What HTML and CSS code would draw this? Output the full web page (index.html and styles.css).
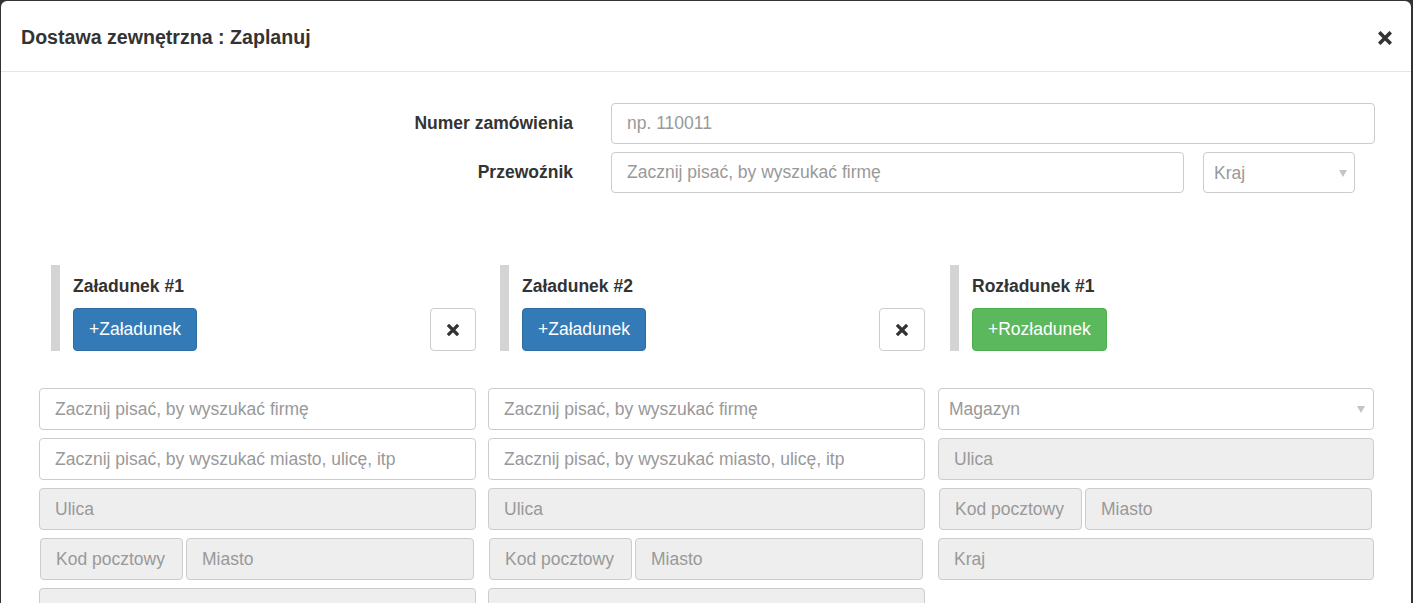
FILE: index.html
```html
<!DOCTYPE html>
<html lang="pl">
<head>
<meta charset="utf-8">
<title>Dostawa zewnętrzna : Zaplanuj</title>
<link rel="stylesheet" href="styles.css">
</head>
<body>
<div class="modal">
  <div class="modal-header">
    <h4 class="modal-title">Dostawa zewnętrzna : Zaplanuj</h4>
    <button class="close" type="button" aria-label="Zamknij">
      <svg width="14" height="14" viewBox="0 0 14 14"><path d="M2.5 2.5 L11.5 11.5 M11.5 2.5 L2.5 11.5" stroke="#333" stroke-width="3.6" stroke-linecap="square"/></svg>
    </button>
  </div>
  <div class="modal-body">
    <div class="top-form">
      <label class="form-label">Numer zamówienia</label>
      <div class="form-field"><input class="form-control" type="text" placeholder="np. 110011"></div>
      <label class="form-label">Przewoźnik</label>
      <div class="form-field split-carrier">
        <input class="form-control" type="text" placeholder="Zacznij pisać, by wyszukać firmę">
        <div class="select-wrap country"><select class="form-control select"><option>Kraj</option></select></div>
      </div>
    </div>

    <div class="columns">
      <div class="col">
        <div class="stop">
          <div class="stop-info">
            <h5 class="stop-title">Załadunek #1</h5>
            <button class="btn btn-primary" type="button">+Załadunek</button>
          </div>
          <button class="btn btn-remove" type="button" aria-label="Usuń">
            <svg width="12" height="12" viewBox="0 0 12 12"><path d="M2 2 L10 10 M10 2 L2 10" stroke="#333" stroke-width="3.2" stroke-linecap="square"/></svg>
          </button>
        </div>
        <div class="fields">
          <input class="form-control" type="text" placeholder="Zacznij pisać, by wyszukać firmę">
          <input class="form-control" type="text" placeholder="Zacznij pisać, by wyszukać miasto, ulicę, itp">
          <input class="form-control readonly" type="text" placeholder="Ulica" readonly>
          <div class="pair">
            <input class="form-control readonly postal" type="text" placeholder="Kod pocztowy" readonly>
            <input class="form-control readonly" type="text" placeholder="Miasto" readonly>
          </div>
          <input class="form-control readonly lower" type="text" placeholder="Kraj" readonly>
        </div>
      </div>

      <div class="col">
        <div class="stop">
          <div class="stop-info">
            <h5 class="stop-title">Załadunek #2</h5>
            <button class="btn btn-primary" type="button">+Załadunek</button>
          </div>
          <button class="btn btn-remove" type="button" aria-label="Usuń">
            <svg width="12" height="12" viewBox="0 0 12 12"><path d="M2 2 L10 10 M10 2 L2 10" stroke="#333" stroke-width="3.2" stroke-linecap="square"/></svg>
          </button>
        </div>
        <div class="fields">
          <input class="form-control" type="text" placeholder="Zacznij pisać, by wyszukać firmę">
          <input class="form-control" type="text" placeholder="Zacznij pisać, by wyszukać miasto, ulicę, itp">
          <input class="form-control readonly" type="text" placeholder="Ulica" readonly>
          <div class="pair">
            <input class="form-control readonly postal" type="text" placeholder="Kod pocztowy" readonly>
            <input class="form-control readonly" type="text" placeholder="Miasto" readonly>
          </div>
          <input class="form-control readonly lower" type="text" placeholder="Kraj" readonly>
        </div>
      </div>

      <div class="col col-last">
        <div class="stop">
          <div class="stop-info">
            <h5 class="stop-title">Rozładunek #1</h5>
            <button class="btn btn-success" type="button">+Rozładunek</button>
          </div>
        </div>
        <div class="fields">
          <div class="select-wrap warehouse"><select class="form-control select"><option>Magazyn</option></select></div>
          <input class="form-control readonly" type="text" placeholder="Ulica" readonly>
          <div class="pair">
            <input class="form-control readonly postal" type="text" placeholder="Kod pocztowy" readonly>
            <input class="form-control readonly" type="text" placeholder="Miasto" readonly>
          </div>
          <input class="form-control readonly" type="text" placeholder="Kraj" readonly>
        </div>
      </div>
    </div>
  </div>
</div>
</body>
</html>
```
FILE: styles.css
```css
html, body {
  height: 603px;
  overflow: hidden;
}
body {
  margin: 0;
  padding: 1px 2px 0 1px;
  background: #333;
  font-family: "Liberation Sans", Arial, sans-serif;
  font-size: 17.5px;
  color: #333;
  box-sizing: border-box;
}
* { box-sizing: border-box; }

.modal {
  background: #fff;
  border-radius: 6px 6px 0 0;
  min-height: 700px;
}

.modal-header {
  height: 71px;
  border-bottom: 1px solid #e5e5e5;
  display: flex;
  align-items: center;
  justify-content: space-between;
  padding: 0 19px 0 20px;
}
.modal-title {
  margin: 0;
  font-size: 19.6px;
  font-weight: bold;
  line-height: 24px;
  padding-top: 1px;
}
.close {
  border: 0;
  background: none;
  padding: 0;
  width: 14px;
  height: 14px;
  display: flex;
  margin-top: 3px;
}

.modal-body {
  padding: 31px 36px 0 38px;
}

.top-form {
  display: grid;
  grid-template-columns: 534px 1fr;
  column-gap: 38px;
  row-gap: 8px;
  align-items: center;
}
.form-label {
  text-align: right;
  font-weight: bold;
  font-size: 17.5px;
}
.form-field { display: flex; }
.split-carrier { gap: 19px; padding-right: 20px; }
.split-carrier > .form-control { flex: 1; }
.country { width: 152px; flex: none; }

.form-control {
  display: block;
  width: 100%;
  height: 41px;
  padding: 0 15px;
  font: 17.5px "Liberation Sans", Arial, sans-serif;
  color: #555;
  background: #fff;
  border: 1px solid #ccc;
  border-radius: 4px;
  outline: none;
}
.form-control::placeholder { color: #999; opacity: 1; }
.form-control.readonly { background: #eee; }

.select-wrap { position: relative; }
.select {
  appearance: none;
  -webkit-appearance: none;
  color: #999;
  padding-left: 10px;
}
.select-wrap::after {
  content: "";
  position: absolute;
  right: 8px;
  top: 50%;
  margin-top: -3px;
  border-left: 4.5px solid transparent;
  border-right: 4.5px solid transparent;
  border-top: 7px solid #c4c4c4;
}
.warehouse .select { height: 42px; }
.warehouse::after { right: 9px; }

.columns {
  margin-top: 72px;
  display: grid;
  grid-template-columns: repeat(3, 437px);
  column-gap: 12px;
}
.col-last { margin-left: 1px; }

.stop {
  margin-left: 12px;
  border-left: 9px solid #d4d4d4;
  padding-left: 13px;
  display: flex;
  justify-content: space-between;
  align-items: flex-end;
  margin-bottom: 37px;
}
.stop-title {
  margin: 0;
  padding-top: 10px;
  font-size: 17.5px;
  line-height: 22px;
  font-weight: bold;
  margin-bottom: 11px;
}
.btn {
  font: 17.5px "Liberation Sans", Arial, sans-serif;
  height: 43px;
  padding: 0 15px;
  border-radius: 4px;
  border: 1px solid transparent;
  cursor: pointer;
  display: flex;
  align-items: center;
  justify-content: center;
}
.btn-primary { background: #337ab7; border-color: #2e6da4; color: #fff; }
.btn-success { background: #5cb85c; border-color: #4cae4c; color: #fff; }
.btn-remove {
  width: 46px;
  background: #fff;
  border-color: #ccc;
  padding: 0;
}

.fields {
  display: flex;
  flex-direction: column;
  gap: 8px;
}
.fields .form-control { height: 42px; }
.fields .form-control.lower { padding-top: 8px; }
.pair {
  display: flex;
  gap: 3px;
  padding: 0 2px 0 1px;
}
.pair .postal { width: 143px; flex: none; }
.pair .form-control:not(.postal) { flex: 1; }
```
